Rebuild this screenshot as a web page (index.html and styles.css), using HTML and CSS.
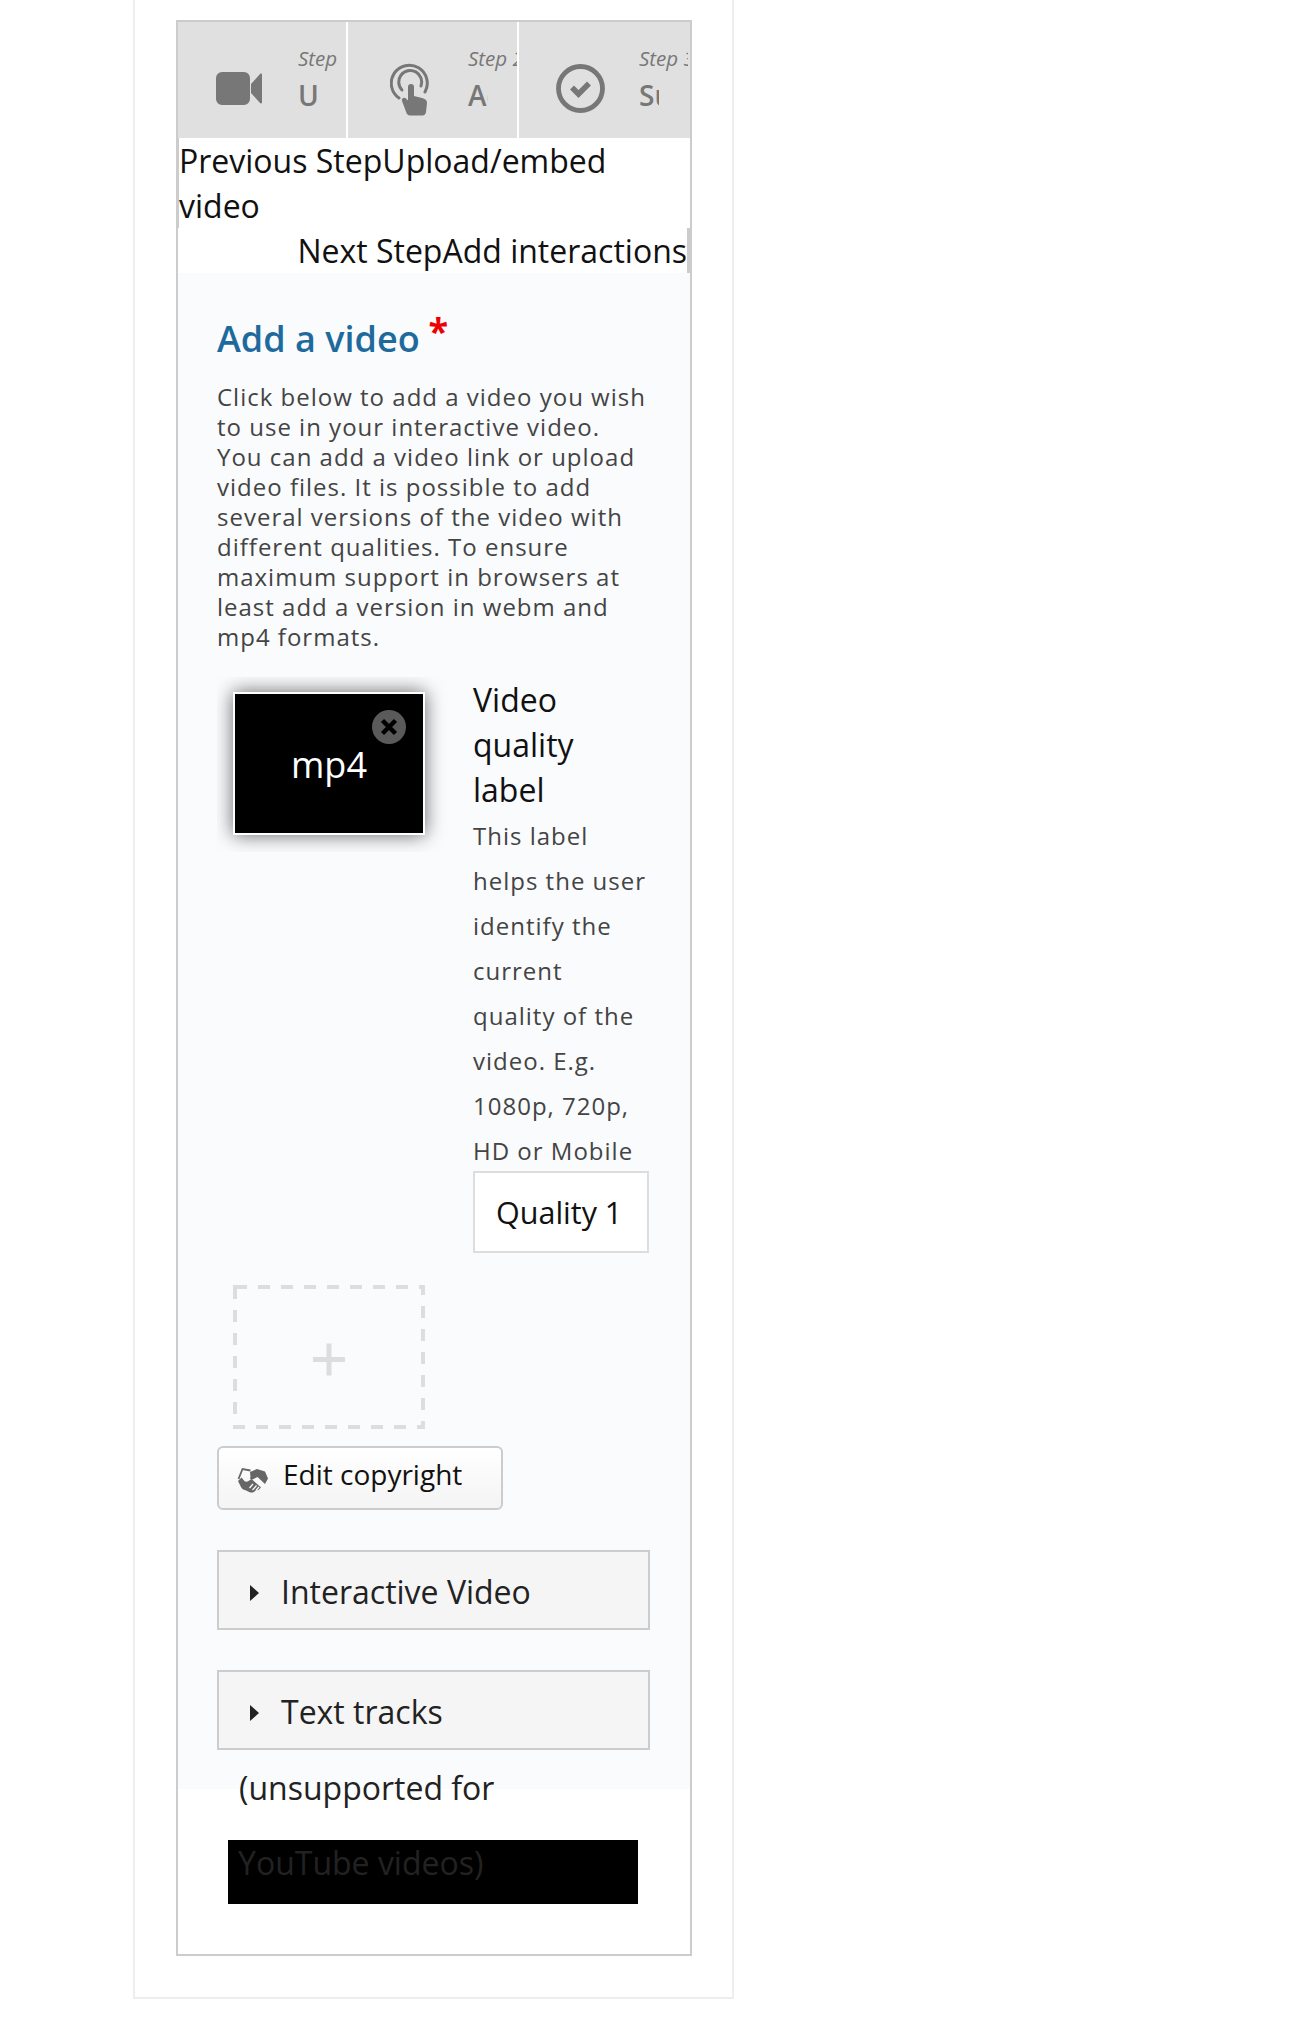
FILE: index.html
```html
<!DOCTYPE html>
<html lang="en">
<head>
<meta charset="utf-8">
<title>Interactive Video</title>
<link rel="stylesheet" href="styles.css">
</head>
<body>
<div class="card">
  <div class="editor">
    <div class="tabs">
      <div class="tab">
        <svg class="tab-icon" width="46" height="33" viewBox="0 0 46 33"><path fill="#777" d="M6 0h22a6 6 0 0 1 6 6v21a6 6 0 0 1-6 6H6a6 6 0 0 1-6-6V6a6 6 0 0 1 6-6zM35 12 44 2c.8-.8 2-.4 2 .8v27.400c0 1.200-1.200 1.600-2 .8L35 21z"/></svg>
        <div class="tab-text"><div class="step">Step 1</div><div class="title">Upload/embed video</div></div>
      </div>
      <div class="tab">
        <svg class="tab-icon" width="40" height="54" viewBox="0 0 40 54"><g fill="none" stroke="#777" stroke-width="3" stroke-linecap="round"><path d="M9 36A18 18 0 1 1 35 30"/><path d="M12 28A11.500 11.500 0 1 1 31 24"/></g><path fill="#777" d="M18 25a3 3 0 0 1 6 0v9l8 2c3 .8 5 2 5 5l-1 9c-.3 2-1.500 3.500-3.500 3.500H20c-1.500 0-2.500-.7-3.300-2L12 39c-1-2.500 2-4.500 4-2.500l2 2z"/></svg>
        <div class="tab-text"><div class="step">Step 2</div><div class="title">Add interactions</div></div>
      </div>
      <div class="tab">
        <svg class="tab-icon" width="49" height="49" viewBox="0 0 49 49"><circle cx="24.500" cy="24.500" r="22" fill="none" stroke="#777" stroke-width="4.800"/><path fill="none" stroke="#777" stroke-width="5.500" d="M16 23.500 22.500 30 33 19.500"/></svg>
        <div class="tab-text"><div class="step">Step 3</div><div class="title">Summary &amp; publish</div></div>
      </div>
    </div>
    <div class="nav">
      <div class="nav-prev">Previous StepUpload/embed video</div>
      <div class="nav-next">Next StepAdd interactions</div>
    </div>
    <div class="form">
      <h2 class="heading">Add a video<span class="req">*</span></h2>
      <p class="desc">Click below to add a video you wish to use in your interactive video. You can add a video link or upload video files. It is possible to add several versions of the video with different qualities. To ensure maximum support in browsers at least add a version in webm and mp4 formats.</p>
      <div class="file-row">
        <div class="thumb-clip">
          <div class="thumb">mp4
            <span class="remove"><svg width="20" height="20" viewBox="0 0 20 20"><path stroke="#000" stroke-width="4.500" d="M3.500 3.500l13 13M16.500 3.500l-13 13"/></svg></span>
          </div>
        </div>
        <div class="quality">
          <div class="q-label">Video quality label</div>
          <div class="q-desc">This label helps the user identify the current quality of the video. E.g. 1080p, 720p, HD or Mobile</div>
          <div class="q-input">Quality 1</div>
        </div>
      </div>
      <svg class="add" width="192" height="144" viewBox="0 0 192 144"><rect x="2" y="2" width="188" height="140" fill="none" stroke="#ddd" stroke-width="4" stroke-dasharray="12 11"/><path stroke="#ddd" stroke-width="5" d="M96 58.500v32M80 74.500h32"/></svg>
      <div class="copyright">
        <svg width="31" height="26" viewBox="0 0 31 26"><path fill="none" stroke="#666" stroke-width="1.800" d="M1.500 12 5.500 2l8 1.500"/><path fill="#666" d="M13 5l7-3 8 2.500 3 7-3 5.500-7.500-7-5 2.500c-2 .5-3-1-2-2.500z"/><path fill="#666" d="M1 14l3.500-3.500 2.500 3c1 1.500 3 1.500 4.500.5l3-2 9.500 8.500-2.500 2.500-3 .5-1.500 1.500c-1.500.8-3 .7-4.300.2L8 23c-2-.3-3-1.200-4-3z"/><path fill="none" stroke="#fff" stroke-width="1.200" d="M12.500 21l3.500-4M15.500 23l4-4.500M19 23.500l3-3.500"/></svg>
        <span>Edit copyright</span>
      </div>
      <div class="group"><i class="arrow"></i><span>Interactive Video</span></div>
      <div class="group"><i class="arrow"></i><span>Text tracks</span></div>
    </div>
    <div class="note">(unsupported for</div>
    <div class="note-dark">YouTube videos)</div>
  </div>
</div>
</body>
</html>
```
FILE: styles.css
```css
* { box-sizing: border-box; }
html, body { margin: 0; background: #fff; }
body { font-family: "Open Sans", "Noto Sans", sans-serif; color: #111; }
.card {
  width: 601px;
  margin-left: 133px;
  padding: 20px 41px 41px;
  border: 2px solid #eee;
  border-top: 0;
}
.editor { width: 516px; border: 2px solid #ccc; }
.tabs { display: flex; height: 116px; gap: 2px; background: #fff; }
.tab {
  position: relative;
  flex: 0 0 169px;
  height: 116px;
  background: #e0e0e0;
  display: flex;
  align-items: center;
  color: #777;
}
.tab:first-child { flex-basis: 168px; }
.tab:last-child { flex: 1 1 auto; }
.tab-icon { flex: none; margin: 17px 0 0 38px; }
.tab:nth-child(2) .tab-icon { margin: 18px 0 0 42px; }
.tab:nth-child(3) .tab-icon { margin: 16px 0 0 37px; }
.tab-text { position: absolute; left: 120px; top: 23px; white-space: nowrap; }
.step { width: 49px; overflow: hidden; font-size: 20.500px; font-style: italic; line-height: 26px; }
.tab:first-child .step { width: 44px; }
.title { width: 19.500px; overflow: hidden; font-size: 28px; line-height: 38px; font-weight: 600; margin-top: 5px; }
.nav { background: #fff; font-size: 32px; line-height: 45px; color: #111; }
.nav-prev { border-left: 1px solid #ccc; }
.nav-next { text-align: right; border-right: 3px solid #ccc; }
.form { background: #fafbfd; padding: 1px 41px 39px 39px; }
.heading { margin: 40px 0 0; font-size: 36px; line-height: 50px; font-weight: 600; color: #1f6a9c; }
.req { color: #e00; font-weight: 700; margin-left: 9px; position: relative; top: -8px; }
.desc { margin: 18px 0 0; width: 434px; font-size: 24px; line-height: 30px; color: #444; letter-spacing: 1px; }
.file-row { display: flex; gap: 24px; margin-top: 25px; align-items: flex-start; }
.thumb-clip { flex: none; width: 232px; height: 175px; padding: 15px 16px; overflow: hidden; }
.thumb {
  position: relative;
  width: 192px;
  height: 143px;
  background: #000;
  border: 2px solid #fff;
  box-shadow: 0 0 18px rgba(0,0,0,.6);
  color: #fff;
  font-size: 36px;
  line-height: 141px;
  text-align: center;
}
.remove {
  position: absolute;
  right: 17px;
  top: 16px;
  width: 34px;
  height: 34px;
  border-radius: 50%;
  background: #5a5a5a;
  display: flex;
  align-items: center;
  justify-content: center;
}
.quality { flex: none; width: 176px; }
.q-label { font-size: 32px; line-height: 45px; color: #111; }
.q-desc { margin-top: 1px; font-size: 24px; line-height: 45px; color: #444; letter-spacing: 1px; }
.q-input {
  margin-top: -2px;
  width: 176px;
  height: 82px;
  padding-left: 21px;
  background: #fff;
  border: 2px solid #ddd;
  font-size: 30.500px;
  line-height: 78px;
  color: #111;
}
.add { display: block; margin: 32px 0 0 16px; }
.copyright {
  display: flex;
  align-items: center;
  gap: 15px;
  width: 286px;
  height: 64px;
  margin-top: 17px;
  padding-left: 18px;
  border: 2px solid #ccc;
  border-radius: 6px;
  background: linear-gradient(#fff, #f4f4f4);
  font-size: 28px;
  color: #111;
}
.copyright span { margin-top: -8px; }
.copyright svg { margin-top: 3px; }
.group {
  display: flex;
  align-items: center;
  gap: 22px;
  width: 433px;
  height: 80px;
  margin-top: 40px;
  padding-left: 31px;
  background: #f5f5f5;
  border: 2px solid #ccc;
  font-size: 32px;
  color: #222;
}
.group span { margin-top: 3px; }
.arrow {
  width: 0;
  height: 0;
  margin-top: 6px;
  border-left: 9px solid #222;
  border-top: 8px solid transparent;
  border-bottom: 8px solid transparent;
}
.note { position: relative; margin: -24px 0 0 61px; font-size: 32px; line-height: 45px; color: #222; }
.note-dark {
  margin: 30px 0 50px 50px;
  width: 410px;
  height: 64px;
  padding-left: 10px;
  background: #000;
  font-size: 32px;
  line-height: 45px;
  color: #222;
}
```
